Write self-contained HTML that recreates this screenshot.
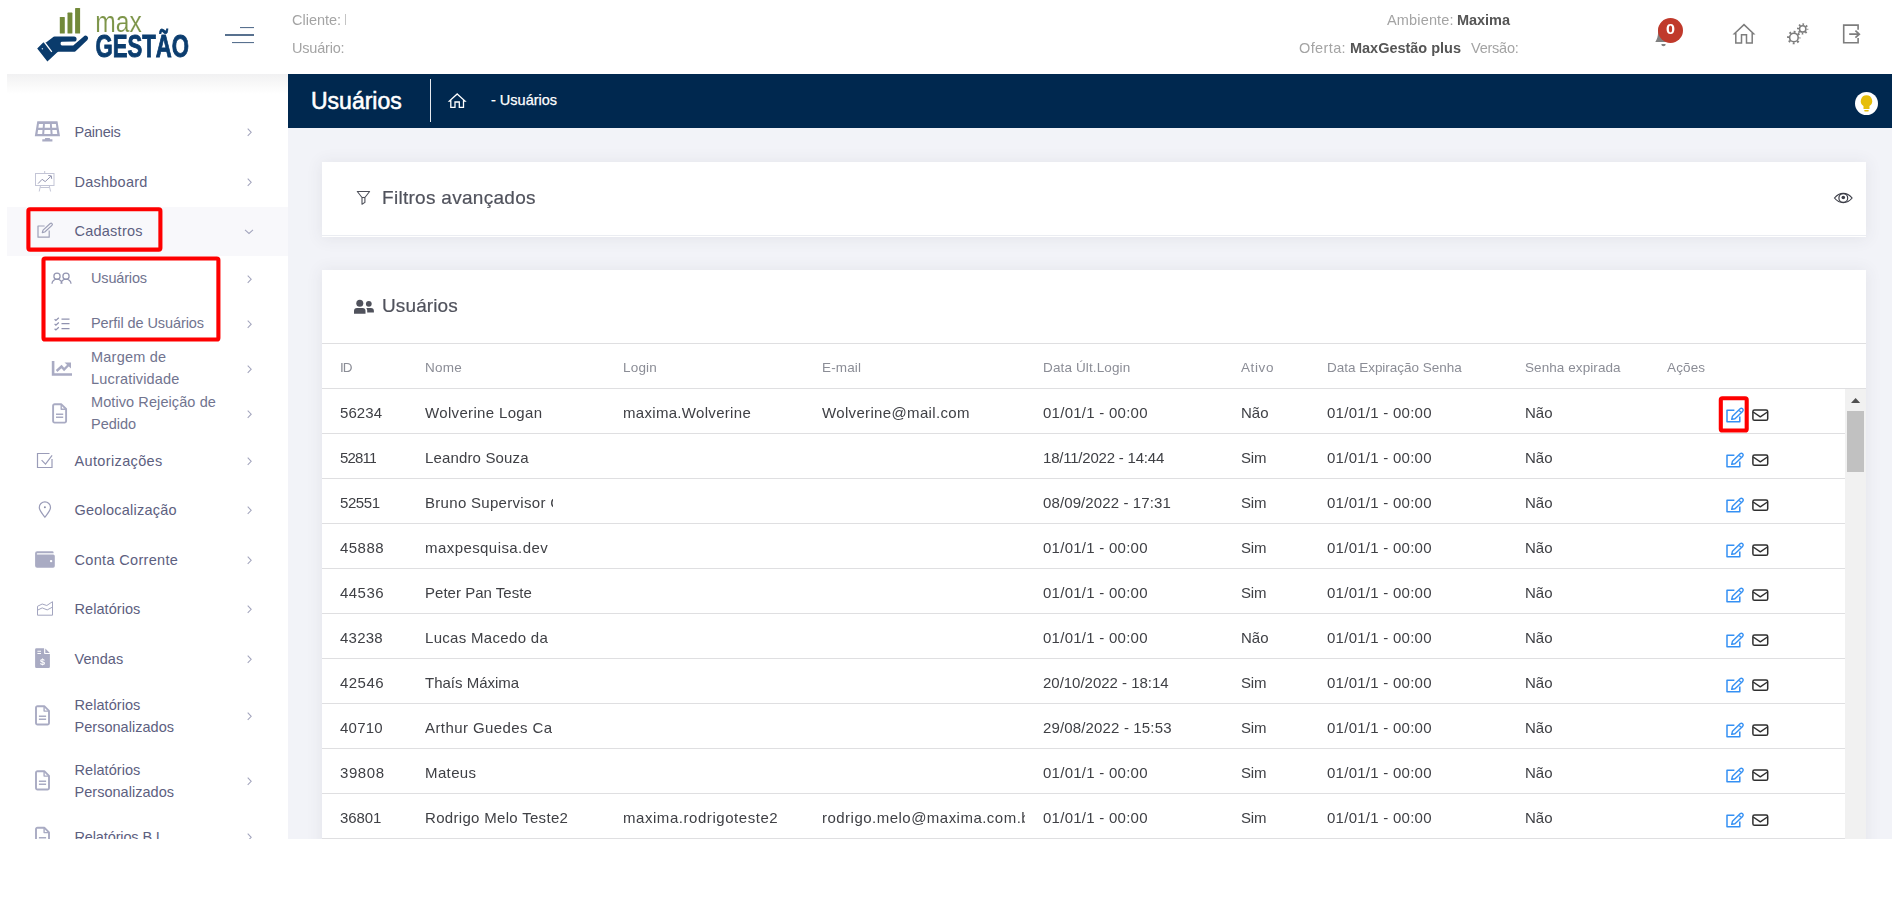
<!DOCTYPE html>
<html lang="pt-BR">
<head>
<meta charset="utf-8">
<title>maxGestão - Usuários</title>
<style>
*{box-sizing:border-box;margin:0;padding:0}
html,body{width:1895px;height:900px;overflow:hidden;background:#fff}
body{font-family:"Liberation Sans",sans-serif;color:#575962;position:relative}
#app{position:absolute;left:0;top:0;width:1892px;height:839px;overflow:hidden;background:#fff}
#icons{position:absolute;left:0;top:0;width:1892px;height:839px;overflow:hidden}
/* header */
.hinfo{will-change:transform;position:absolute;font-size:14.5px;color:#a4a4a4;white-space:nowrap;line-height:18px}
.hinfo.hb{color:#555;font-weight:bold}
/* sidebar */
#shade{position:absolute;left:7px;top:74px;width:281px;height:20px;background:linear-gradient(#f1f1f2,#f9f9f9 55%,#fff)}
#cadbg{position:absolute;left:7px;top:207px;width:281px;height:49px;background:#f8f8fb}
.mi{position:absolute;font-size:14.5px;color:#5d6080;line-height:22px;white-space:nowrap}
.mi.sub{color:#71748f}
.red{position:absolute;border:4px solid #fe0000;border-radius:4px}
/* main */
#main{position:absolute;left:288px;top:74px;width:1604px;height:765px;background:#f2f3f8}
#titlebar{position:absolute;left:288px;top:74px;width:1604px;height:54px;background:#00284f}
#titlebar h1{position:absolute;left:23px;top:13px;font-size:23px;line-height:28px;font-weight:normal;color:#fff;-webkit-text-stroke:.55px #fff}
#titlebar .sep{position:absolute;left:142px;top:5px;width:1px;height:43px;background:#e6e9ee}
#titlebar .crumb{position:absolute;left:203px;top:17px;font-size:14.5px;line-height:18px;color:#fff;white-space:nowrap;-webkit-text-stroke:.25px #fff}
.card{position:absolute;background:#fff;box-shadow:0 1px 15px 1px rgba(69,65,78,.08)}
.h3{will-change:transform;position:absolute;font-size:19px;font-weight:normal;color:#50525c;line-height:24px;white-space:nowrap;-webkit-text-stroke:.2px #50525c}
.th{will-change:transform;position:absolute;font-size:13.5px;color:#8b8d96;line-height:16px;white-space:nowrap;letter-spacing:.1px}
.ln{position:absolute;left:322px;height:1px;background:#dfdfe1}
.td{will-change:transform;position:absolute;font-size:15px;line-height:18px;color:#3f4045;white-space:nowrap;overflow:hidden;letter-spacing:.3px}
#sbtrack{position:absolute;left:1845px;top:389px;width:21px;height:450px;background:#f1f1f1}
#sbthumb{position:absolute;left:1847px;top:411px;width:17px;height:61px;background:#c1c1c1}
</style>
</head>
<body>
<div id="app">
<div class="hinfo" style="left:291.5px;top:11px;letter-spacing:-0.01px">Cliente:</div>
<div class="hinfo" style="left:291.5px;top:39px;letter-spacing:-0.20px">Usuário:</div>
<div class="hinfo" style="left:1386.5px;top:11px;letter-spacing:0.16px">Ambiente:</div>
<div class="hinfo hb" style="left:1457.4px;top:11px;letter-spacing:-0.04px">Maxima</div>
<div class="hinfo" style="left:1298.9px;top:39px;letter-spacing:0.38px">Oferta:</div>
<div class="hinfo hb" style="left:1349.8px;top:39px;letter-spacing:-0.02px">MaxGestão plus</div>
<div class="hinfo" style="left:1471.4px;top:39px;letter-spacing:-0.23px">Versão:</div>
<div id="shade"></div><div id="cadbg"></div>
<div class="mi" style="left:74.5px;top:121px;letter-spacing:-0.20px">Paineis</div>
<div class="mi" style="left:74.5px;top:171px;letter-spacing:0.24px">Dashboard</div>
<div class="mi" style="left:74.5px;top:220px;letter-spacing:0.24px">Cadastros</div>
<div class="mi sub" style="left:91.0px;top:267px;letter-spacing:-0.17px">Usuários</div>
<div class="mi sub" style="left:91.0px;top:312px;letter-spacing:-0.08px">Perfil de Usuários</div>
<div class="mi sub" style="left:91.0px;top:346px;letter-spacing:0.22px">Margem de</div>
<div class="mi sub" style="left:91.0px;top:368px;letter-spacing:0.18px">Lucratividade</div>
<div class="mi sub" style="left:91.0px;top:391px;letter-spacing:0.09px">Motivo Rejeição de</div>
<div class="mi sub" style="left:91.0px;top:413px;letter-spacing:-0.02px">Pedido</div>
<div class="mi" style="left:74.5px;top:450px;letter-spacing:0.36px">Autorizações</div>
<div class="mi" style="left:74.5px;top:499px;letter-spacing:0.23px">Geolocalização</div>
<div class="mi" style="left:74.5px;top:549px;letter-spacing:0.33px">Conta Corrente</div>
<div class="mi" style="left:74.5px;top:598px;letter-spacing:0.06px">Relatórios</div>
<div class="mi" style="left:74.5px;top:648px;letter-spacing:0.06px">Vendas</div>
<div class="mi" style="left:74.5px;top:694px;letter-spacing:0.06px">Relatórios</div>
<div class="mi" style="left:74.5px;top:716px;letter-spacing:0.03px">Personalizados</div>
<div class="mi" style="left:74.5px;top:759px;letter-spacing:0.06px">Relatórios</div>
<div class="mi" style="left:74.5px;top:781px;letter-spacing:0.03px">Personalizados</div>
<div class="mi" style="left:74.5px;top:826px;letter-spacing:-0.13px">Relatórios B.I</div>
<div id="main"></div>
<div id="titlebar"><h1>Usuários</h1><div class="sep"></div><div class="crumb">- Usuários</div></div>
<div class="card" style="left:322px;top:162px;width:1544px;height:75px"></div>
<div style="position:absolute;left:322px;top:235px;width:1544px;height:1px;background:#ebedf2"></div>
<div class="h3" style="left:381.500px;top:186px;letter-spacing:0.29px">Filtros avançados</div>
<div class="card" style="left:322px;top:270px;width:1544px;height:600px"></div>
<div class="h3" style="left:381.500px;top:294px;letter-spacing:0.12px">Usuários</div>
<div class="ln" style="top:343px;width:1544px"></div>
<div class="th" style="left:340px;top:360px;letter-spacing:-1.10px">ID</div>
<div class="th" style="left:425px;top:360px;letter-spacing:0.29px">Nome</div>
<div class="th" style="left:623px;top:360px;letter-spacing:0.19px">Login</div>
<div class="th" style="left:822px;top:360px;letter-spacing:0.13px">E-mail</div>
<div class="th" style="left:1043px;top:360px;letter-spacing:0.13px">Data Últ.Login</div>
<div class="th" style="left:1241px;top:360px;letter-spacing:0.60px">Ativo</div>
<div class="th" style="left:1327px;top:360px;letter-spacing:-0.02px">Data Expiração Senha</div>
<div class="th" style="left:1525px;top:360px;letter-spacing:0.08px">Senha expirada</div>
<div class="th" style="left:1667px;top:360px;letter-spacing:0.14px">Ações</div>
<div id="sbtrack"></div><div id="sbthumb"></div>
<div class="ln" style="top:388px;width:1544px"></div>
<div class="td" style="left:340px;top:404px;max-width:80px;letter-spacing:0.07px">56234</div>
<div class="td" style="left:425px;top:404px;max-width:160px;letter-spacing:0.34px">Wolverine Logan</div>
<div class="td" style="left:623px;top:404px;max-width:190px;letter-spacing:0.31px">maxima.Wolverine</div>
<div class="td" style="left:822px;top:404px;max-width:203px;letter-spacing:0.34px">Wolverine@mail.com</div>
<div class="td" style="left:1043px;top:404px;max-width:190px;letter-spacing:0.26px">01/01/1 - 00:00</div>
<div class="td" style="left:1241px;top:404px;max-width:80px;letter-spacing:0.03px">Não</div>
<div class="td" style="left:1327px;top:404px;max-width:190px;letter-spacing:0.26px">01/01/1 - 00:00</div>
<div class="td" style="left:1525px;top:404px;max-width:130px;letter-spacing:0.03px">Não</div>
<div class="ln" style="top:433px;width:1523px"></div>
<div class="td" style="left:340px;top:449px;max-width:80px;letter-spacing:-0.83px">52811</div>
<div class="td" style="left:425px;top:449px;max-width:160px;letter-spacing:0.15px">Leandro Souza</div>
<div class="td" style="left:1043px;top:449px;max-width:190px;letter-spacing:-0.21px">18/11/2022 - 14:44</div>
<div class="td" style="left:1241px;top:449px;max-width:80px;letter-spacing:-0.22px">Sim</div>
<div class="td" style="left:1327px;top:449px;max-width:190px;letter-spacing:0.26px">01/01/1 - 00:00</div>
<div class="td" style="left:1525px;top:449px;max-width:130px;letter-spacing:0.03px">Não</div>
<div class="ln" style="top:478px;width:1523px"></div>
<div class="td" style="left:340px;top:494px;max-width:80px;letter-spacing:-0.43px">52551</div>
<div class="td" style="left:425px;top:494px;max-width:128px;letter-spacing:0.30px">Bruno Supervisor G</div>
<div class="td" style="left:1043px;top:494px;max-width:190px;letter-spacing:0.11px">08/09/2022 - 17:31</div>
<div class="td" style="left:1241px;top:494px;max-width:80px;letter-spacing:-0.22px">Sim</div>
<div class="td" style="left:1327px;top:494px;max-width:190px;letter-spacing:0.26px">01/01/1 - 00:00</div>
<div class="td" style="left:1525px;top:494px;max-width:130px;letter-spacing:0.03px">Não</div>
<div class="ln" style="top:523px;width:1523px"></div>
<div class="td" style="left:340px;top:539px;max-width:80px;letter-spacing:0.47px">45888</div>
<div class="td" style="left:425px;top:539px;max-width:160px;letter-spacing:0.43px">maxpesquisa.dev</div>
<div class="td" style="left:1043px;top:539px;max-width:190px;letter-spacing:0.26px">01/01/1 - 00:00</div>
<div class="td" style="left:1241px;top:539px;max-width:80px;letter-spacing:-0.22px">Sim</div>
<div class="td" style="left:1327px;top:539px;max-width:190px;letter-spacing:0.26px">01/01/1 - 00:00</div>
<div class="td" style="left:1525px;top:539px;max-width:130px;letter-spacing:0.03px">Não</div>
<div class="ln" style="top:568px;width:1523px"></div>
<div class="td" style="left:340px;top:584px;max-width:80px;letter-spacing:0.47px">44536</div>
<div class="td" style="left:425px;top:584px;max-width:160px;letter-spacing:0.02px">Peter Pan Teste</div>
<div class="td" style="left:1043px;top:584px;max-width:190px;letter-spacing:0.26px">01/01/1 - 00:00</div>
<div class="td" style="left:1241px;top:584px;max-width:80px;letter-spacing:-0.22px">Sim</div>
<div class="td" style="left:1327px;top:584px;max-width:190px;letter-spacing:0.26px">01/01/1 - 00:00</div>
<div class="td" style="left:1525px;top:584px;max-width:130px;letter-spacing:0.03px">Não</div>
<div class="ln" style="top:613px;width:1523px"></div>
<div class="td" style="left:340px;top:629px;max-width:80px;letter-spacing:0.25px">43238</div>
<div class="td" style="left:425px;top:629px;max-width:160px;letter-spacing:0.31px">Lucas Macedo da</div>
<div class="td" style="left:1043px;top:629px;max-width:190px;letter-spacing:0.26px">01/01/1 - 00:00</div>
<div class="td" style="left:1241px;top:629px;max-width:80px;letter-spacing:0.03px">Não</div>
<div class="td" style="left:1327px;top:629px;max-width:190px;letter-spacing:0.26px">01/01/1 - 00:00</div>
<div class="td" style="left:1525px;top:629px;max-width:130px;letter-spacing:0.03px">Não</div>
<div class="ln" style="top:658px;width:1523px"></div>
<div class="td" style="left:340px;top:674px;max-width:80px;letter-spacing:0.47px">42546</div>
<div class="td" style="left:425px;top:674px;max-width:160px;letter-spacing:-0.00px">Thaís Máxima</div>
<div class="td" style="left:1043px;top:674px;max-width:190px;letter-spacing:-0.02px">20/10/2022 - 18:14</div>
<div class="td" style="left:1241px;top:674px;max-width:80px;letter-spacing:-0.22px">Sim</div>
<div class="td" style="left:1327px;top:674px;max-width:190px;letter-spacing:0.26px">01/01/1 - 00:00</div>
<div class="td" style="left:1525px;top:674px;max-width:130px;letter-spacing:0.03px">Não</div>
<div class="ln" style="top:703px;width:1523px"></div>
<div class="td" style="left:340px;top:719px;max-width:80px;letter-spacing:0.25px">40710</div>
<div class="td" style="left:425px;top:719px;max-width:128px;letter-spacing:0.41px">Arthur Guedes Ca</div>
<div class="td" style="left:1043px;top:719px;max-width:190px;letter-spacing:0.15px">29/08/2022 - 15:53</div>
<div class="td" style="left:1241px;top:719px;max-width:80px;letter-spacing:-0.22px">Sim</div>
<div class="td" style="left:1327px;top:719px;max-width:190px;letter-spacing:0.26px">01/01/1 - 00:00</div>
<div class="td" style="left:1525px;top:719px;max-width:130px;letter-spacing:0.03px">Não</div>
<div class="ln" style="top:748px;width:1523px"></div>
<div class="td" style="left:340px;top:764px;max-width:80px;letter-spacing:0.57px">39808</div>
<div class="td" style="left:425px;top:764px;max-width:160px;letter-spacing:0.38px">Mateus</div>
<div class="td" style="left:1043px;top:764px;max-width:190px;letter-spacing:0.26px">01/01/1 - 00:00</div>
<div class="td" style="left:1241px;top:764px;max-width:80px;letter-spacing:-0.22px">Sim</div>
<div class="td" style="left:1327px;top:764px;max-width:190px;letter-spacing:0.26px">01/01/1 - 00:00</div>
<div class="td" style="left:1525px;top:764px;max-width:130px;letter-spacing:0.03px">Não</div>
<div class="ln" style="top:793px;width:1523px"></div>
<div class="td" style="left:340px;top:809px;max-width:80px;letter-spacing:-0.10px">36801</div>
<div class="td" style="left:425px;top:809px;max-width:160px;letter-spacing:0.31px">Rodrigo Melo Teste2</div>
<div class="td" style="left:623px;top:809px;max-width:190px;letter-spacing:0.55px">maxima.rodrigoteste2</div>
<div class="td" style="left:822px;top:809px;max-width:203px;letter-spacing:0.48px">rodrigo.melo@maxima.com.br</div>
<div class="td" style="left:1043px;top:809px;max-width:190px;letter-spacing:0.26px">01/01/1 - 00:00</div>
<div class="td" style="left:1241px;top:809px;max-width:80px;letter-spacing:-0.22px">Sim</div>
<div class="td" style="left:1327px;top:809px;max-width:190px;letter-spacing:0.26px">01/01/1 - 00:00</div>
<div class="td" style="left:1525px;top:809px;max-width:130px;letter-spacing:0.03px">Não</div>
<div class="ln" style="top:838px;width:1523px"></div>
<svg id="icons" width="1892" height="839" viewBox="0 0 1892 839">
<defs>
<g id="act" fill="none" stroke-linejoin="round"><path d="M1734.4 410.200H1727V421.800H1739.800V416.400" stroke="#3590f3" stroke-width="1.5"/><path transform="translate(1731.700 419.400) rotate(-44)" d="M0 0L2.800 -1.800H13.400a1.800 1.800 0 0 1 0 3.600H2.800ZM11.600 -1.800V1.800" stroke="#3590f3" stroke-width="1.400" fill="#fff"/><rect x="1752.900" y="409.900" width="14.800" height="10.400" rx="1.600" stroke="#2f2f2f" stroke-width="1.5"/><path d="M1753.200 412l7.100 4.900 7.100-4.900" stroke="#2f2f2f" stroke-width="1.400"/></g>
<g id="file" fill="none" stroke="#a9abc3" stroke-width="1.9" stroke-linejoin="round"><path d="M2.4 .9h6.8l4.7 4.7v12.1a1.5 1.5 0 0 1-1.5 1.5h-10a1.5 1.5 0 0 1-1.5-1.5v-15.3a1.5 1.5 0 0 1 1.5-1.5z"/><path d="M9 1v4.8h4.8" stroke-width="1.4"/><path d="M3.8 10.9h7.2M3.8 13.9h7.2" stroke-width="1.5"/></g>
</defs>
<g fill="#72893a"><rect x="59.8" y="17" width="5" height="16.6" rx=".6"/><rect x="67.5" y="12.6" width="4.9" height="21" rx=".6"/><rect x="75.1" y="7.9" width="5" height="25.7" rx=".6"/></g>
<path fill="#0a3b6c" d="M37.200 48.600L43.200 42.600L46 42.400L53.600 36.700Q54 36.400 54.600 36.400L74 36.400A2.600 2.600 0 0 1 74 41.600L62 41.800Q60.600 41.800 60.600 43.200L60.600 44Q60.600 45.400 62 45.400L73.200 45.400L83.700 36.500A2.450 2.450 0 0 1 87.400 39.900L75.600 51.300Q75.200 51.700 74.600 51.700L58.400 51.800Q57.800 51.800 57.300 52.200L47.400 61.600Z"/>
<path d="M44.300 42l7.500 9.900" stroke="#fff" stroke-width="1.250" fill="none"/><circle cx="42.400" cy="48.800" r=".75" fill="#cfd9e4"/>
<text x="95.3" y="32" font-family="Liberation Sans, sans-serif" font-size="29.500" fill="#7d9549" stroke="#fff" stroke-width=".15" textLength="46.5" lengthAdjust="spacingAndGlyphs">max</text>
<text x="95.6" y="56.5" font-family="Liberation Sans, sans-serif" font-size="31" font-weight="bold" fill="#0b3d6f" stroke="#0b3d6f" stroke-width=".9" textLength="93.4" lengthAdjust="spacingAndGlyphs">GESTÃO</text>
<g fill="#58718f"><rect x="240" y="27" width="14" height="1.1"/><rect x="225" y="34" width="29" height="2"/><rect x="232" y="42" width="22" height="1.1"/></g>
<rect x="345" y="14" width="1" height="11" fill="#c4c4c4"/>
<path fill="#808080" d="M1663.5 24c3.6 0 5.4 3 5.4 7.5 0 5 1.2 8 2.8 10.6h-16.4c1.6-2.6 2.8-5.600 2.800-10.6 0-4.5 1.800-7.5 5.400-7.5z"/><path fill="#808080" d="M1661.300 44h4.4a2.200 2.200 0 0 1-4.400 0z"/>
<circle cx="1670.500" cy="30.500" r="12.500" fill="#c0392b"/>
<text x="1666" y="34.400" font-family="Liberation Sans, sans-serif" font-size="14" font-weight="bold" fill="#fff" textLength="9" lengthAdjust="spacingAndGlyphs">0</text>
<path fill="none" stroke="#7d7d7d" stroke-width="1.5" stroke-linejoin="miter" d="M1744 24.6L1753.6 33.7H1752.2V42.9H1746.5V34.8H1741.5V42.9H1735.8V33.7H1734.4Z"/>
<circle cx="1793.9" cy="37.5" r="4.30" fill="none" stroke="#7d7d7d" stroke-width="1.60"/><circle cx="1793.9" cy="37.5" r="5.80" fill="none" stroke="#7d7d7d" stroke-width="2.00" stroke-dasharray="1.913 2.642" stroke-dashoffset="0.957"/>
<circle cx="1802.7" cy="28.9" r="3.20" fill="none" stroke="#7d7d7d" stroke-width="1.50"/><circle cx="1802.7" cy="28.9" r="4.70" fill="none" stroke="#7d7d7d" stroke-width="2.00" stroke-dasharray="1.550 2.141" stroke-dashoffset="0.775"/>
<g fill="none" stroke="#7d7d7d" stroke-width="1.6"><path d="M1858.100 29.800v-4.700h-14.400v17.700h14.400v-4.700"/><path d="M1849.200 34.200h10.300M1855.400 30.700l3.900 3.500-3.900 3.500" stroke-width="1.700"/></g>
<path fill="none" stroke="#fff" stroke-width="1.3" stroke-linejoin="miter" d="M457.200 93.900L465 101H463.500V107.300H459.300V102H455V107.300H450.800V101H449.400Z"/>
<circle cx="1866.500" cy="103.500" r="11.500" fill="#fff"/>
<path fill="#e6be0a" d="M1866.500 95.200a5.800 5.800 0 0 1 3 10.700v3.100h-6v-3.100a5.800 5.800 0 0 1 3-10.700z"/><rect x="1864.200" y="110" width="4.600" height="1.500" rx=".7" fill="#e6be0a"/>
<path fill="#a9abc3" fill-rule="evenodd" d="M37.300 121.300h20.200l2.500 15h-25.200zM38.900 124l-.5 3.800h4.300l.3-3.800zM44.900 124l-.2 3.800h5.400l-.2-3.800zM51.800 124l.3 3.800h4.300l-.5-3.800zM38.100 130l-.6 4h4.700l.3-4zM44.500 130l-.3 4h6.400l-.3-4zM52.300 130l.3 4h4.700l-.6-4z"/>
<path fill="#a9abc3" d="M45.200 138h4.500l.4 1.300h2.300v2.200h-10.100v-2.200h2.500z"/>
<g fill="none" stroke="#c3c5d6" stroke-width="1"><rect x="35.500" y="173.500" width="18.500" height="12"/><path d="M44.700 171v2.500M40.500 185.500l-1.300 6M49.200 185.500l1.400 6M40.200 187.500h9.200"/></g>
<path fill="none" stroke="#9395b0" stroke-width="1" d="M38.100 183.600l4-4.300 3.100 2.300 6-5.600M48.300 175.500l3 .4.400 3"/>
<g fill="none" stroke="#9ea0b8" stroke-width="1.200" stroke-linejoin="round"><path d="M44.600 226h-6.600v11.200h11.200v-6.600"/><path transform="translate(42.300 232.600) rotate(-43)" d="M0 0L2.200 -1.250H12a1.250 1.250 0 0 1 0 2.500H2.200Z" fill="#f8f8fb"/></g>
<g fill="none" stroke="#9496b2" stroke-width="1.250"><circle cx="57" cy="276.300" r="3.100"/><circle cx="66" cy="276.300" r="3.100"/><path d="M52 283.800a5 4.600 0 0 1 10 0M61 283.800a5 4.600 0 0 1 10 0"/></g>
<g fill="none" stroke="#9092b0" stroke-width="1.250"><path d="M61.500 319h8M61.500 323.700h8M61.500 328.500h8"/><path d="M54.600 319.200l1.300 1.200 2.900-2.600M54.600 323.900l1.300 1.200 2.900-2.600M54.600 328.700l1.300 1.200 2.900-2.600"/></g>
<path fill="#a9abc3" d="M51.800 361h2.600v12.200h17.600v2.600h-20.200z"/>
<path fill="none" stroke="#a9abc3" stroke-width="2.400" d="M56.600 371l4.900-4.500 2.600 3 4.400-4.500"/><path fill="#a9abc3" d="M64.500 362.500h6.500v6z"/>
<use href="#file" x="52.200" y="403.400"/>
<use href="#file" x="35.100" y="705.300"/>
<use href="#file" x="35.100" y="770.300"/>
<use href="#file" x="35.100" y="826.800"/>
<g fill="none" stroke="#9a9cb8" stroke-width="1.2"><path d="M52 459v8.500h-14.500v-14h12"/><path d="M41.600 460.200l3.900 3.900 6.600-8.700"/></g>
<g fill="none" stroke="#9a9cb8" stroke-width="1.2"><path d="M44.900 517.200c-2.800-3.800-5.600-6.700-5.600-9.700a5.600 5.600 0 0 1 11.200 0c0 3-2.800 5.900-5.600 9.700z"/></g><circle cx="44.900" cy="507.300" r="1" fill="#8a8ca8"/>
<path fill="#a9abc3" d="M37.100 551.200h15.200a1.300 1.300 0 0 1 1.300 1.300v.8h-16.200a.6.600 0 0 0 0 1.200h15.800a1.600 1.600 0 0 1 1.600 1.600v10a1.700 1.700 0 0 1-1.700 1.700h-16a2 2 0 0 1-2-2v-12.600a2 2 0 0 1 2-2z"/><circle cx="51.100" cy="561.100" r="1.200" fill="#fff"/>
<g fill="none" stroke="#a3a5bf" stroke-width="1" stroke-linejoin="round"><path d="M37.500 606.300l4.700-2.300 4.600 1.500 5.700-3.800v13.500h-15z"/><path d="M37.500 610.200l4.700-2.300 5 2 5.300-2.800"/></g>
<path fill="#a9abc3" d="M35.100 649.600a1.300 1.300 0 0 1 1.300-1.300h7.700v4.600a1.200 1.200 0 0 0 1.200 1.200h4.600v12.700a1.300 1.300 0 0 1-1.300 1.300h-12.200a1.300 1.300 0 0 1-1.300-1.300zM45.300 648.400l4.500 4.500h-4.500z"/>
<path fill="#fff" d="M37.400 650.800h3.600v1h-3.600zM37.400 653.100h3.600v1h-3.600z"/>
<text x="42.600" y="665.100" text-anchor="middle" font-family="Liberation Sans, sans-serif" font-size="9" font-weight="bold" fill="#fff">$</text>
<g fill="none" stroke="#a3a5bd" stroke-width="1.050"><path d="M247.700 128.7l3.500 3.600l-3.500 3.600"/><path d="M247.700 178.7l3.500 3.600l-3.500 3.600"/><path d="M245 229.9l4 3.6l4 -3.6"/><path d="M247.700 275.6l3.500 3.600l-3.500 3.600"/><path d="M247.700 320.6l3.500 3.600l-3.500 3.600"/><path d="M247.700 365.6l3.500 3.600l-3.500 3.600"/><path d="M247.700 410.6l3.500 3.600l-3.500 3.600"/><path d="M247.700 457.7l3.500 3.600l-3.500 3.600"/><path d="M247.700 506.7l3.500 3.600l-3.500 3.600"/><path d="M247.700 556.7l3.500 3.600l-3.500 3.600"/><path d="M247.700 605.7l3.500 3.600l-3.500 3.600"/><path d="M247.700 655.7l3.500 3.600l-3.500 3.600"/><path d="M247.700 712.7l3.500 3.600l-3.500 3.600"/><path d="M247.700 777.7l3.500 3.600l-3.500 3.600"/><path d="M247.700 833.7l3.500 3.600l-3.500 3.600"/></g>
<g fill="none" stroke="#4e505a" stroke-width="1.100" stroke-linejoin="round"><path d="M357.300 191.500h12.300l-4.700 6v4.900l-2.900 1.800v-6.700z"/><path d="M362 197.500h3"/></g>
<g fill="none" stroke="#3c3e48" stroke-width="1.200"><path d="M1834.500 198c2.400-3 5.400-4.700 8.800-4.700s6.400 1.700 8.800 4.700c-2.400 3-5.400 4.700-8.800 4.700s-6.400-1.700-8.800-4.700z"/><circle cx="1843.300" cy="198" r="4.400"/></g><circle cx="1843.300" cy="197.500" r="1.800" fill="#3c3e48"/>
<g fill="#50525c"><circle cx="359.800" cy="303.300" r="3.500"/><path d="M354 313.800v-2.800a3 3 0 0 1 3-3h5.500a3 3 0 0 1 3 3v2.800z"/><circle cx="368.800" cy="303.800" r="2.900"/><path d="M366.300 308.100h4.600a3 3 0 0 1 3 3v1.500h-6.700v-2a4 4 0 0 0-.9-2.500z"/></g>
<path fill="#505050" d="M1851 403h9.200l-4.600-5z"/>
<use href="#act" y="0"/><use href="#act" y="45"/><use href="#act" y="90"/><use href="#act" y="135"/><use href="#act" y="180"/><use href="#act" y="225"/><use href="#act" y="270"/><use href="#act" y="315"/><use href="#act" y="360"/><use href="#act" y="405"/>
</svg>
<svg style="position:absolute;left:0;top:0" width="1892" height="839" viewBox="0 0 1892 839"><g fill="none" stroke="#fe0000" stroke-width="4.1"><rect x="28.400" y="209.300" width="132" height="40.300" rx="1.600"/><rect x="43.500" y="258.500" width="174.900" height="81" rx="1.600"/><rect x="1720.800" y="398.200" width="25.900" height="32.300" rx="1.600"/></g></svg>
</div>
</body>
</html>
